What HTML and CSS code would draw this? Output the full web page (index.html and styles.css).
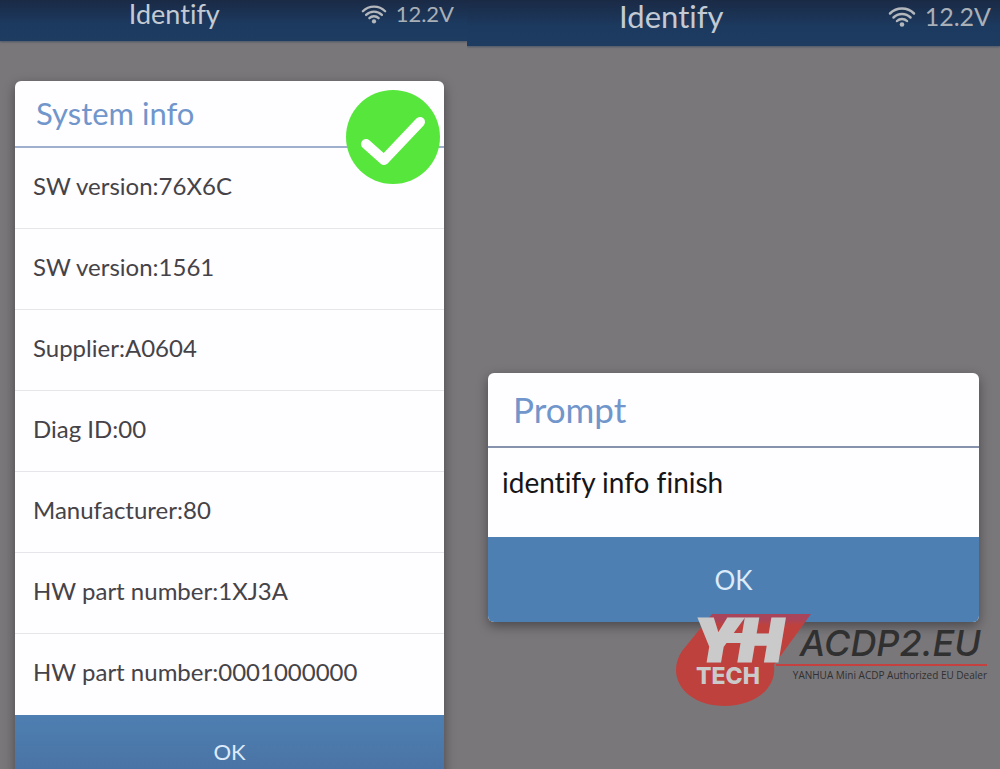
FILE: index.html
```html
<!doctype html>
<html lang="en">
<head>
	<meta charset="utf-8">
	<meta name="viewport" content="width=device-width, initial-scale=1">
	<title>Identify</title>
	<link rel="stylesheet" href="styles.css">
</head>

<body>
	<div class="all">
		<!-- system info -->
		<section class="screen screen-info">
			<header class="bar">
				<h1>Identify</h1>
				<div class="status">
					<svg class="wifi" viewBox="0 0 28 21">
						<path d="M2 7.500A17 17 0 0 1 26 7.500M5.500 11.500A12 12 0 0 1 22.500 11.500M9 15A7 7 0 0 1 19 15"/>
						<circle cx="14" cy="18.500" r="2.300"/>
					</svg>
					<span>12.2V</span>
				</div>
			</header>
			<div class="dialog">
				<h2>System info</h2>
				<svg class="done" viewBox="0 0 94 94">
					<circle cx="47" cy="47" r="47"/>
					<path d="M20 54L38 70L74 32"/>
				</svg>
				<ul class="list">
					<li>SW version:76X6C</li>
					<li>SW version:1561</li>
					<li>Supplier:A0604</li>
					<li>Diag ID:00</li>
					<li>Manufacturer:80</li>
					<li>HW part number:1XJ3A</li>
					<li>HW part number:0001000000</li>
				</ul>
				<button type="button" class="ok">OK</button>
			</div>
		</section>

		<!-- prompt -->
		<section class="screen screen-prompt">
			<header class="bar">
				<h1>Identify</h1>
				<div class="status">
					<svg class="wifi" viewBox="0 0 28 21">
						<path d="M2 7.500A17 17 0 0 1 26 7.500M5.500 11.500A12 12 0 0 1 22.500 11.500M9 15A7 7 0 0 1 19 15"/>
						<circle cx="14" cy="18.500" r="2.300"/>
					</svg>
					<span>12.2V</span>
				</div>
			</header>
			<div class="dialog">
				<h2>Prompt</h2>
				<p>identify info finish</p>
				<button type="button" class="ok">OK</button>
			</div>
			<div class="brand">
				<svg class="logo" viewBox="0 0 136 92">
					<defs>
						<linearGradient id="red" x2="0" y2="1">
							<stop offset="0" stop-color="#a9445a"/>
							<stop offset=".06" stop-color="#a9445a"/>
							<stop offset=".12" stop-color="#be413e"/>
						</linearGradient>
					</defs>
					<path class="drop" d="M36 0H135L98 51C101 75 78 92 49 92C20 92 0 76 0 56C0 49 2 43 6 37Z"/>
					<path class="joint" d="M38 19H76L70 29H32Z"/>
					<text class="yh" x="18" y="47">YH</text>
					<text class="tech" x="20" y="70">TECH</text>
				</svg>
				<div class="brand-text">
					<strong>ACDP2.EU</strong>
					<small>YANHUA Mini ACDP Authorized EU Dealer</small>
				</div>
			</div>
		</section>
	</div>
</body>
</html>
```
FILE: styles.css
```css
/* reset */
body,h1,h2,p,ul{margin:0;padding:0;}
*{box-sizing:border-box;}
body{font-family:Lato,"Noto Sans",sans-serif;font-variant-ligatures:none;background:#7a777a;}

/* two phone screens side by side */
.all{display:grid;grid-template-columns:467fr 533fr;height:100vh;overflow:hidden;}
.screen{position:relative;overflow:hidden;background:#7a777a;}

/* top bar */
.bar{display:flex;align-items:flex-start;height:41px;padding-right:13px;background:linear-gradient(#1a2a45,#1c3a60 60%,#1e3b60);color:#c3cad3;box-shadow:0 1px 2px #4a5568;}
.bar h1{flex:1;padding-right:12px;font-size:27px;line-height:28px;font-weight:400;text-align:center;}
.status{display:flex;align-items:center;gap:9px;font-size:22px;line-height:28px;color:#a9afb7;}
.wifi{width:26px;height:20px;fill:#b4b8bd;}
.wifi path{fill:none;stroke:#b4b8bd;stroke-width:2.500;stroke-linecap:round;}

/* dialogs */
.dialog{position:relative;margin:40px 23px 0 15px;border-radius:6px;background:#fefdff;box-shadow:0 4px 12px rgba(0,0,0,.4);overflow:hidden;}
.dialog h2{height:67px;padding-left:21px;border-bottom:2px solid #9eb0cd;font-size:31px;line-height:64px;font-weight:400;color:#7096cb;}
.list{list-style:none;font-size:24px;color:#454347;}
.list li{height:81px;padding-left:18px;line-height:76px;border-bottom:1px solid #e6e5e9;}
.list li:last-child{border-bottom:0;}
.ok{display:block;width:100%;height:74px;padding:0;border:0;background:linear-gradient(#4e7fb2,#486f9f);font:22px/74px Lato,sans-serif;color:#dcebfa;cursor:pointer;}
.done{position:absolute;top:9px;right:4px;width:94px;height:94px;fill:#57e63c;}
.done path{fill:none;stroke:#fff;stroke-width:10;stroke-linecap:round;stroke-linejoin:round;}

/* prompt screen is a little larger */
.screen-prompt .bar{height:46px;padding-right:9px;}
.screen-prompt .bar h1{font-size:31px;line-height:32px;}
.screen-prompt .status{font-size:25px;line-height:32px;}
.screen-prompt .wifi{width:28px;height:21px;}
.screen-prompt .dialog{margin:327px 21px 0;}
.screen-prompt .dialog h2{height:75px;padding-left:25px;border-color:#8793ad;font-size:35px;line-height:72px;}
.screen-prompt .dialog p{height:89px;padding-left:14px;font-size:28px;line-height:68px;color:#161518;}
.screen-prompt .ok{height:85px;background:#4e7fb2;font-size:26px;line-height:82px;}

/* dealer mark over the prompt */
.brand{position:absolute;right:13px;bottom:63px;display:flex;align-items:flex-start;}
.logo{flex:none;width:136px;height:92px;margin-right:-36px;overflow:visible;}
.drop{fill:url(#red);}
.joint{fill:#cacaca;}
.yh,.tech{fill:#cacaca;font-family:Inter,sans-serif;}
.yh{font-size:58px;font-weight:900;font-style:italic;stroke:#cacaca;stroke-width:3;}
.tech{font-size:23px;font-weight:800;}
.brand-text{padding-top:8px;font-family:Inter,sans-serif;color:#303030;white-space:nowrap;}
.brand-text strong{display:block;padding-left:24px;border-bottom:2px solid #c5413f;font-size:36px;line-height:42px;font-weight:500;font-style:italic;}
.brand-text small{display:block;padding-left:17px;font:500 10px/18px "Open Sans",sans-serif;text-align:right;}
```
